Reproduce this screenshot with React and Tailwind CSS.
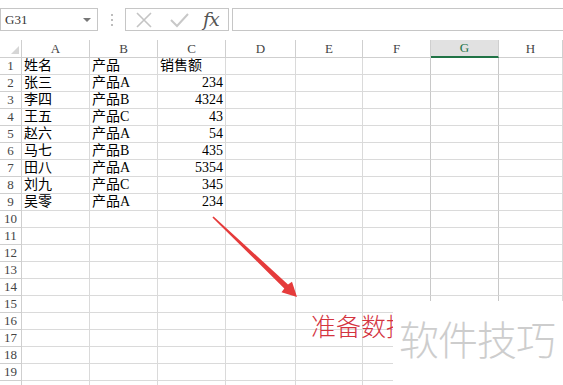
import React from "react";

const cols = ["A", "B", "C", "D", "E", "F", "G", "H"];

const data = [
  ["姓名", "产品", "销售额"],
  ["张三", "产品A", "234"],
  ["李四", "产品B", "4324"],
  ["王五", "产品C", "43"],
  ["赵六", "产品A", "54"],
  ["马七", "产品B", "435"],
  ["田八", "产品A", "5354"],
  ["刘九", "产品C", "345"],
  ["吴零", "产品A", "234"],
];

function Toolbar() {
  return (
    <div className="h-[40px] flex items-start pt-2">
      {/* name box */}
      <div className="w-[98px] h-[23px] border border-[#c6c6c6] flex items-center justify-between pl-[4px] pr-[6px] text-[13px] text-[#333]">
        <span>G31</span>
        <span className="w-0 h-0 border-l-[4px] border-r-[4px] border-t-[4px] border-l-transparent border-r-transparent border-t-[#777]" />
      </div>
      <div className="w-[27px] h-[23px] flex flex-col items-center justify-center gap-[3px]">
        <span className="w-[2px] h-[2px] bg-[#bdbdbd]" />
        <span className="w-[2px] h-[2px] bg-[#bdbdbd]" />
        <span className="w-[2px] h-[2px] bg-[#bdbdbd]" />
      </div>
      {/* cancel / enter / fx */}
      <div className="w-[104px] h-[23px] border border-[#c6c6c6] flex items-center pl-[8px]">
        <svg width="20" height="16" viewBox="0 0 20 16">
          <path d="M3 1 L17 15 M17 1 L3 15" stroke="#c4c4c4" strokeWidth="1.6" fill="none" />
        </svg>
        <svg width="20" height="16" viewBox="0 0 20 16" className="ml-[15px]">
          <path d="M2 8 L8 14 L19 2" stroke="#c8c8c8" strokeWidth="2" fill="none" />
        </svg>
        <span className="ml-[14px] italic text-[19px] leading-none text-[#555] font-['DejaVu_Serif',serif] tracking-[-1px]">fx</span>
      </div>
      {/* formula input */}
      <div className="ml-[3px] flex-1 h-[23px] border border-r-0 border-[#c6c6c6]" />
    </div>
  );
}

function Sheet() {
  const rows = Array.from({ length: 20 }, (_, i) => i + 1);
  return (
    <div className="grid grid-cols-[22px_68px_68px_68px_70px_67px_68px_68px_1fr]">
      {/* corner cell */}
      <div className="h-[18px] border-r border-b border-[#cfcfcf] flex items-end justify-end pr-[2px] pb-[3px]">
        <svg width="8" height="8" viewBox="0 0 8 8">
          <polygon points="8,0 8,8 0,8" fill="#d6d6d6" />
        </svg>
      </div>
      {cols.map((c) =>
        c === "G" ? (
          <div key={c} className="h-[18px] bg-[#e1e1e1] border-r border-[#cfcfcf] border-b-2 border-b-[#217346] flex items-center justify-center text-[13px] text-[#217346]">
            {c}
          </div>
        ) : (
          <div key={c} className="h-[18px] border-r border-b border-[#cfcfcf] flex items-center justify-center text-[13px] text-[#444]">
            {c}
          </div>
        )
      )}
      {rows.map((r) => {
        const d = data[r - 1] || [];
        return (
          <React.Fragment key={r}>
            <div className="h-[17px] border-r border-b border-[#cfcfcf] flex items-center justify-center text-[13px] text-[#444]">
              {r}
            </div>
            {cols.map((c, ci) => {
              const v = d[ci];
              const num = ci === 2 && r > 1;
              return (
                <div
                  key={c}
                  className={
                    "h-[17px] border-b border-[#dadada] flex items-center leading-none whitespace-nowrap overflow-visible " +
                    (c === "F" ? "border-r border-r-[#c8c8c8] " : "border-r ") +
                    (c === "G" ? "border-r-[#c8c8c8] " : "") +
                    (num ? "justify-end pr-[2px]" : "pl-[2px]")
                  }
                >
                  {v}
                </div>
              );
            })}
          </React.Fragment>
        );
      })}
    </div>
  );
}

export default function App() {
  return (
    <div className="relative w-[563px] h-[385px] overflow-hidden bg-white text-[14px] text-black font-['Liberation_Serif','Noto_Sans_CJK_SC',serif]">
      <Toolbar />
      <Sheet />

      {/* arrow */}
      <svg className="absolute left-0 top-0 pointer-events-none" width="563" height="385" viewBox="0 0 563 385">
        <polygon
          points="212.4,217.6 284.3,288.4 281.5,292.2 297,297 292,281.8 288,284.4 213.6,216.4"
          fill="#e53b3b"
        />
      </svg>

      {/* red caption */}
      <div className="absolute left-[311px] top-[313px] text-[25px] leading-none text-[#d4343f] font-['Noto_Sans_CJK_SC',sans-serif] font-light whitespace-nowrap">
        准备数据
      </div>

      {/* watermark cover */}
      <div className="absolute left-[393px] top-[301px] right-0 bottom-0 bg-white">
        <div className="pl-[6px] pt-[17px] text-[40px] leading-none text-[#cdcdcd] font-['Noto_Sans_CJK_SC',sans-serif] font-light whitespace-nowrap tracking-[-1px]">
          软件技巧
        </div>
      </div>
    </div>
  );
}
